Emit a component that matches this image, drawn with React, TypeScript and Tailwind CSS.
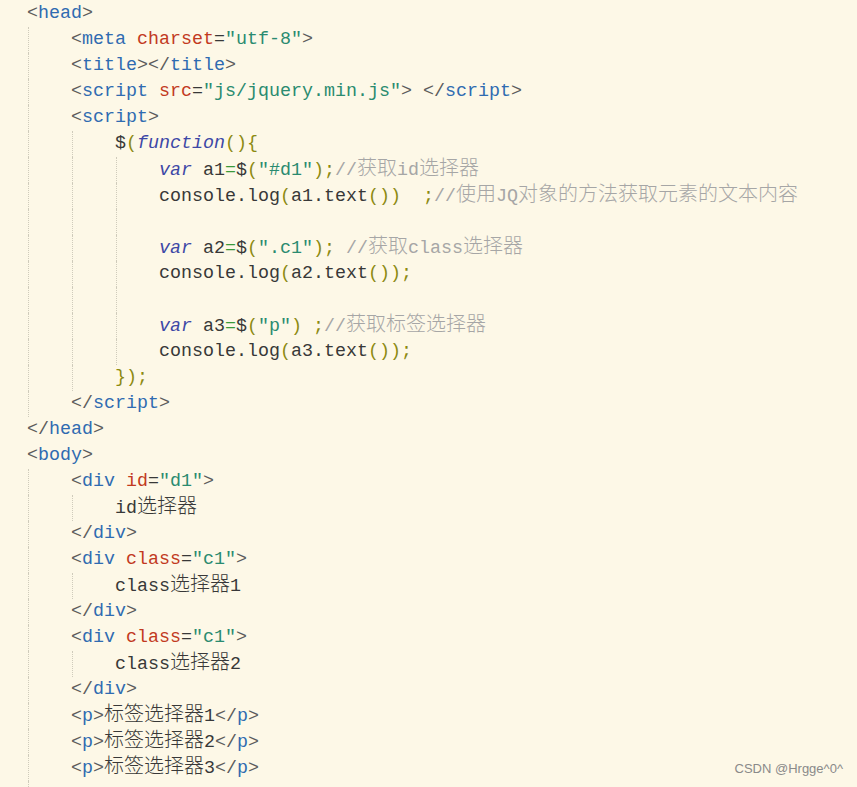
import React from "react";

type Tok = [string, string];
type Line = { indent: number; toks: Tok[] };

// token colour classes
const cls: Record<string, string> = {
  p: "text-[#5c5c5c]", // < > </
  t: "text-[#2f6bb1]", // tag names
  a: "text-[#c23a1f]", // attribute names
  s: "text-[#2a8b70]", // strings
  x: "text-[#383838]", // plain text
  k: "text-[#3d48a6] italic", // var / function
  o: "text-[#8c8a12]", // parens, braces, semicolons
  e: "text-[#3a9a3a]", // js =
  c: "text-[#a6a6a6]", // comments
};

const tag = (name: string, close = false): Tok[] => [
  ["p", close ? "</" : "<"],
  ["t", name],
  ["p", ">"],
];

const lines: Line[] = [
  { indent: 0, toks: tag("head") },
  { indent: 1, toks: [["p", "<"], ["t", "meta"], ["x", " "], ["a", "charset"], ["x", "="], ["s", '"utf-8"'], ["p", ">"]] },
  { indent: 1, toks: [...tag("title"), ...tag("title", true)] },
  {
    indent: 1,
    toks: [["p", "<"], ["t", "script"], ["x", " "], ["a", "src"], ["x", "="], ["s", '"js/jquery.min.js"'], ["p", ">"], ["x", " "], ...tag("script", true)],
  },
  { indent: 1, toks: tag("script") },
  { indent: 2, toks: [["x", "$"], ["o", "("], ["k", "function"], ["o", "(){"]] },
  { indent: 3, toks: [["k", "var"], ["x", " a1"], ["e", "="], ["x", "$"], ["o", "("], ["s", '"#d1"'], ["o", ");"], ["c", "//获取id选择器"]] },
  { indent: 3, toks: [["x", "console.log"], ["o", "("], ["x", "a1.text"], ["o", "())"], ["x", "  "], ["o", ";"], ["c", "//使用JQ对象的方法获取元素的文本内容"]] },
  { indent: 3, toks: [] },
  { indent: 3, toks: [["k", "var"], ["x", " a2"], ["e", "="], ["x", "$"], ["o", "("], ["s", '".c1"'], ["o", ");"], ["x", " "], ["c", "//获取class选择器"]] },
  { indent: 3, toks: [["x", "console.log"], ["o", "("], ["x", "a2.text"], ["o", "());"]] },
  { indent: 3, toks: [] },
  { indent: 3, toks: [["k", "var"], ["x", " a3"], ["e", "="], ["x", "$"], ["o", "("], ["s", '"p"'], ["o", ")"], ["x", " "], ["o", ";"], ["c", "//获取标签选择器"]] },
  { indent: 3, toks: [["x", "console.log"], ["o", "("], ["x", "a3.text"], ["o", "());"]] },
  { indent: 2, toks: [["o", "});"]] },
  { indent: 1, toks: tag("script", true) },
  { indent: 0, toks: tag("head", true) },
  { indent: 0, toks: tag("body") },
  { indent: 1, toks: [["p", "<"], ["t", "div"], ["x", " "], ["a", "id"], ["x", "="], ["s", '"d1"'], ["p", ">"]] },
  { indent: 2, toks: [["x", "id选择器"]] },
  { indent: 1, toks: tag("div", true) },
  { indent: 1, toks: [["p", "<"], ["t", "div"], ["x", " "], ["a", "class"], ["x", "="], ["s", '"c1"'], ["p", ">"]] },
  { indent: 2, toks: [["x", "class选择器1"]] },
  { indent: 1, toks: tag("div", true) },
  { indent: 1, toks: [["p", "<"], ["t", "div"], ["x", " "], ["a", "class"], ["x", "="], ["s", '"c1"'], ["p", ">"]] },
  { indent: 2, toks: [["x", "class选择器2"]] },
  { indent: 1, toks: tag("div", true) },
  { indent: 1, toks: [...tag("p"), ["x", "标签选择器1"], ...tag("p", true)] },
  { indent: 1, toks: [...tag("p"), ["x", "标签选择器2"], ...tag("p", true)] },
  { indent: 1, toks: [...tag("p"), ["x", "标签选择器3"], ...tag("p", true)] },
  { indent: 1, toks: [] },
];

// CJK glyphs are a bit wider than the mono ascii in the editor
const cjk = /([\u3000-\u9fff\uff00-\uffef]+)/;

function Text({ text }: { text: string }) {
  const parts = text.split(cjk);
  return (
    <>
      {parts.map((part, i) =>
        cjk.test(part) ? (
          <span key={i} className="text-[20px] font-light">
            {part}
          </span>
        ) : (
          <React.Fragment key={i}>{part}</React.Fragment>
        )
      )}
    </>
  );
}

function CodeLine({ line }: { line: Line }) {
  return (
    <div className="flex h-[26px] items-stretch whitespace-pre leading-[26px]">
      {Array.from({ length: line.indent }).map((_, i) => (
        <span key={i} className="inline-block w-[44px] shrink-0 pl-[1px]">
          <span className="block h-full w-px border-l border-dotted border-[#cfcbbb]" />
        </span>
      ))}
      <span>
        {line.toks.map(([k, t], i) => (
          <span key={i} className={cls[k]}>
            <Text text={t} />
          </span>
        ))}
      </span>
    </div>
  );
}

export default function App() {
  return (
    <div className="relative h-[787px] w-full overflow-hidden bg-[#fdf8e7]">
      <div
        className="mt-px pl-[27px] text-[18.33px] text-[#383838]"
        style={{ fontFamily: '"Liberation Mono", "Noto Sans CJK SC", monospace' }}
      >
        {lines.map((line, i) => (
          <CodeLine key={i} line={line} />
        ))}
      </div>
      <div className="absolute bottom-[9px] right-[14px] font-['Liberation_Sans',sans-serif] text-[13px] text-[#8a8a8a]">
        CSDN @Hrgge^0^
      </div>
    </div>
  );
}
